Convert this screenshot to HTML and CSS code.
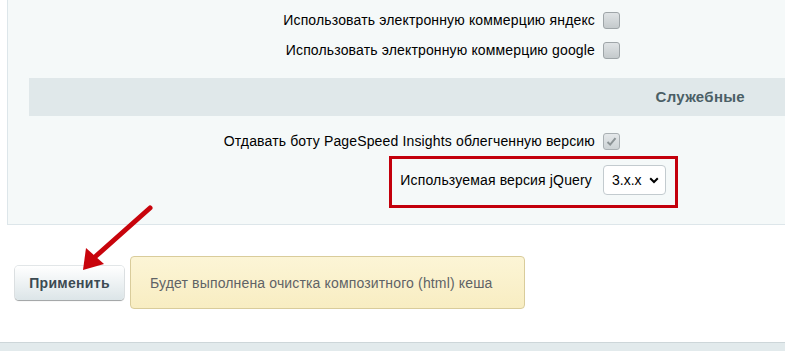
FILE: index.html
```html
<!DOCTYPE html>
<html lang="ru">
<head>
<meta charset="UTF-8">
<meta name="viewport" content="width=device-width, initial-scale=1.0">
<title>Настройки</title>
<link rel="stylesheet" href="styles.css">
</head>
<body>
<div class="panel">
  <div class="row">
    <label class="row-label" for="ecomYandex">Использовать электронную коммерцию яндекс</label>
    <div class="row-field"><span class="checkbox" id="ecomYandex"></span></div>
  </div>
  <div class="row">
    <label class="row-label" for="ecomGoogle">Использовать электронную коммерцию google</label>
    <div class="row-field"><span class="checkbox" id="ecomGoogle"></span></div>
  </div>

  <div class="section-head">Служебные</div>

  <div class="row">
    <label class="row-label" for="pagespeed">Отдавать боту PageSpeed Insights облегченную версию</label>
    <div class="row-field">
      <span class="checkbox checked" id="pagespeed">
        <svg width="13" height="13" viewBox="0 0 13 13"><path d="M2.5 7 L5.2 9.6 L10.5 3.2" fill="none" stroke="#8c9496" stroke-width="2"/></svg>
      </span>
    </div>
  </div>

  <div class="row-highlight">
    <div class="highlight">
      <label class="row-label" for="jquery">Используемая версия jQuery</label>
      <div class="select" id="jquery">
        <span>3.x.x</span>
        <svg width="10" height="7" viewBox="0 0 10 7"><path d="M1.2 1.3 L5 5 L8.8 1.3" fill="none" stroke="#000" stroke-width="2"/></svg>
      </div>
    </div>
  </div>
</div>

<div class="actions">
  <button class="btn">Применить</button>
  <div class="notice">Будет выполнена очистка композитного (html) кеша</div>
</div>

<div class="footer-bar"></div>

<svg class="arrow" width="785" height="351" viewBox="0 0 785 351">
  <line x1="150" y1="208" x2="96" y2="256" stroke="#c8040c" stroke-width="5" stroke-linecap="round"/>
  <polygon points="83,270 86,248 104,264" fill="#c8040c"/>
</svg>
</body>
</html>
```

FILE: styles.css
```css
body {
    margin: 0;
    background: #fff;
    font-family: "Liberation Sans", Arial, sans-serif;
    font-size: 14px;
    letter-spacing: 0.15px;
    color: #000;
    position: relative;
    height: 351px;
    overflow: hidden;
}
.panel {
    margin-left: 7px;
    padding: 5px 0 16px;
    background: #f5f9f9;
    border-left: 1px solid #dde6ea;
    border-bottom: 1px solid #dde6ea;
}
.row {
    display: grid;
    grid-template-columns: 587px 1fr;
    column-gap: 8px;
    align-items: center;
    height: 30px;
}
.row-label {
    text-align: right;
    white-space: nowrap;
}
.row-field {
    display: flex;
    align-items: center;
}
.checkbox {
    width: 15px;
    height: 15px;
    border: 1px solid #9ea5a8;
    border-radius: 3px;
    background: linear-gradient(#dfe3e5, #c4cacc);
    display: flex;
    align-items: center;
    justify-content: center;
}
.checkbox.checked {
    background: linear-gradient(#e4e8ea, #cdd3d5);
    border-color: #a9b0b3;
}
.section-head {
    margin: 13px 0 10px 21px;
    height: 38px;
    line-height: 38px;
    background: #e0e8ea;
    text-align: right;
    padding-right: 40px;
    font-weight: bold;
    font-size: 15px;
    letter-spacing: 0.3px;
    color: #4b5f66;
}
.row-highlight {
    display: flex;
    justify-content: flex-end;
    padding-right: 107px;
}
.highlight {
    display: flex;
    align-items: center;
    gap: 11px;
    padding: 6px 9px 10px 8px;
    border: 3px solid #c3000c;
}
.select {
    box-sizing: border-box;
    width: 63px;
    height: 30px;
    border: 1px solid #c3cbcf;
    border-radius: 4px;
    background: #fff;
    display: flex;
    align-items: center;
    justify-content: space-between;
    padding: 0 6px 0 8px;
    letter-spacing: 0;
}
.actions {
    display: flex;
    align-items: center;
    gap: 6px;
    padding: 31px 0 0 15px;
}
.btn {
    width: 109px;
    height: 34px;
    border: none;
    border-radius: 4px;
    background: linear-gradient(#ffffff, #dce5e8);
    box-shadow: 0 1px 1px rgba(0, 0, 0, 0.3), 0 0 0 1px rgba(190, 200, 205, 0.45);
    font-family: "Liberation Sans", Arial, sans-serif;
    font-size: 14px;
    letter-spacing: 0.3px;
    font-weight: bold;
    color: #3c4a52;
}
.notice {
    width: 395px;
    height: 53px;
    box-sizing: border-box;
    padding: 0 19px;
    display: flex;
    align-items: center;
    border: 1px solid #d9cc9b;
    border-radius: 4px;
    background: linear-gradient(#fcf5d6, #f8edc2);
    color: #5f6366;
}
.footer-bar {
    margin-top: 33px;
    height: 10px;
    border-top: 1px solid #cdd6d9;
    background: #e2eaec;
}
.arrow {
    position: absolute;
    left: 0;
    top: 0;
    pointer-events: none;
}
```
